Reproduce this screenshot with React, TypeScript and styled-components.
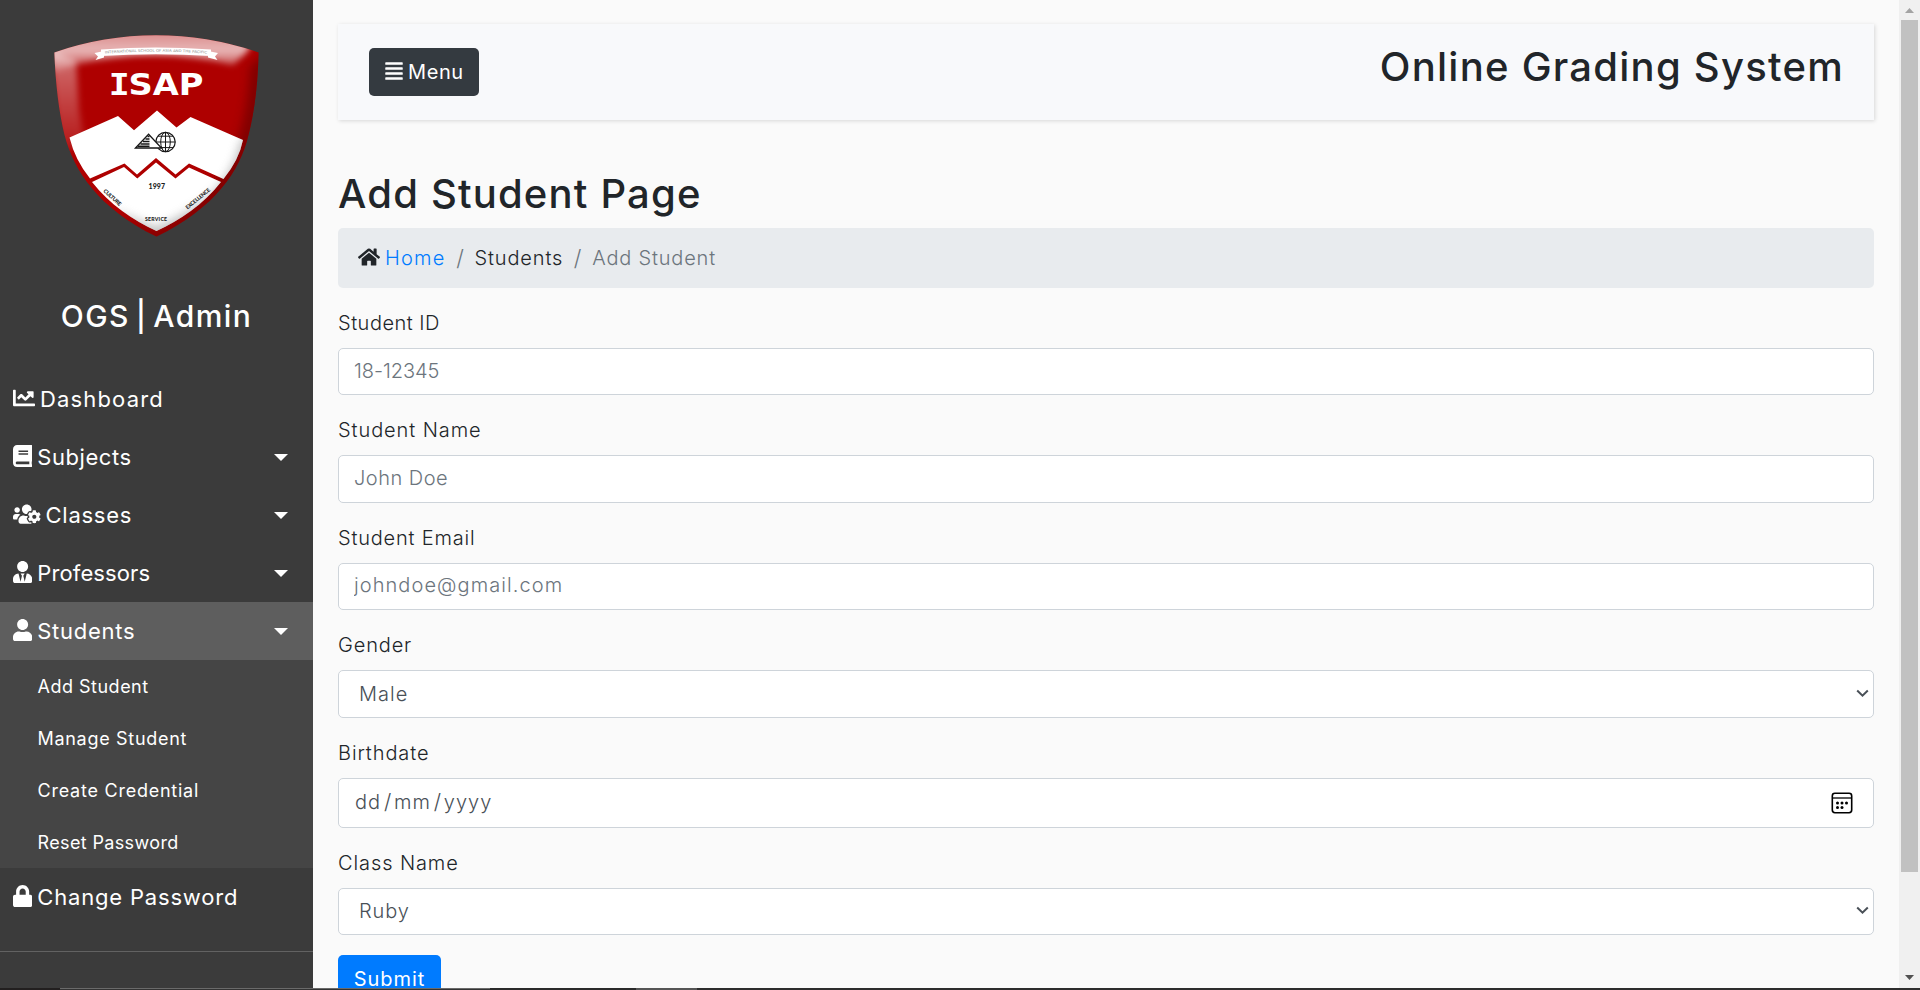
import React from "react";
import styled, { createGlobalStyle } from "styled-components";
import {
  FaAlignJustify,
  FaBook,
  FaChartLine,
  FaHome,
  FaLock,
  FaUser,
  FaUsersCog,
  FaUserTie,
} from "react-icons/fa";

const GlobalStyle = createGlobalStyle`
  *, *::before, *::after { box-sizing: border-box; }
  html, body { margin: 0; padding: 0; overflow: hidden; }
  body {
    background: #fafafa;
    color: #212529;
    font-family: Inter, "Open Sans", sans-serif;
    font-size: 20px;
    font-weight: 350;
    line-height: 30px;
  }
`;

const Page = styled.div`
  height: 990px;
  display: flex;
  flex-direction: column;
`;

const Viewport = styled.div`
  height: 988px;
  display: flex;
  overflow: hidden;
`;

/* ---------- Sidebar ---------- */

const Sidebar = styled.nav`
  width: 313px;
  flex: none;
  background: #3b3b3b;
  color: #fff;
  font-weight: 400;
`;

const SidebarHeader = styled.div`
  height: 370px;
  padding-top: 35px;
  display: flex;
  flex-direction: column;
  align-items: center;
`;

const Crest = styled.svg`
  display: block;
  width: 206px;
  height: 202px;
`;

const Brand = styled.h3`
  margin: 61px 0 0;
  font-size: 30px;
  line-height: 36px;
  font-weight: 500;
  letter-spacing: 1.4px;
  word-spacing: -3.5px;
`;

const NavRow = styled.a<{ $active?: boolean }>`
  display: flex;
  align-items: center;
  height: 58px;
  padding: 0 25px 0 13px;
  font-size: 22px;
  background: ${(p) => (p.$active ? "#5e5e5e" : "transparent")};
`;

const NavIcon = styled.span<{ $w: number }>`
  display: flex;
  width: ${(p) => p.$w}px;
  margin: -2px 5px 0 0;
  svg {
    width: 100%;
    height: 22px;
  }
`;

const Tracked = styled.span<{ $ls: number }>`
  letter-spacing: ${(p) => p.$ls}px;
  white-space: nowrap;
`;

const Caret = styled.span`
  margin-left: auto;
  border-top: 7px solid #fff;
  border-left: 7px solid transparent;
  border-right: 7px solid transparent;
`;

const SubMenu = styled.div`
  background: #454545;
`;

const SubRow = styled.a`
  display: flex;
  align-items: center;
  height: 52px;
  padding: 2px 0 0 37.5px;
  font-size: 18px;
`;

const NavDivider = styled.div`
  margin-top: 25px;
  height: 1px;
  background: #626262;
`;

/* ---------- Content ---------- */

const Content = styled.main`
  flex: 1;
  min-width: 0;
  padding: 24px 25px 0;
`;

const TopBar = styled.header`
  display: flex;
  align-items: center;
  justify-content: space-between;
  height: 96px;
  padding: 0 30px 0 31px;
  background: #f8f9fb;
  box-shadow: 1px 1px 4px rgba(0, 0, 0, 0.14);
`;

const MenuButton = styled.button`
  display: flex;
  align-items: center;
  width: 110px;
  height: 48px;
  padding: 0 0 0 16px;
  border: 0;
  border-radius: 5px;
  background: #343a40;
  color: #fff;
  font: 400 20px/30px Inter, sans-serif;
  svg {
    width: 18px;
    height: 20px;
    margin: -2px 5px 0 0;
  }
`;

const Heading = styled.h2<{ $ls: number }>`
  margin: 0 0 10px;
  font-size: 40px;
  line-height: 48px;
  font-weight: 500;
  letter-spacing: ${(p) => p.$ls}px;
`;

const PageTitle = styled(Heading)`
  margin-top: 50px;
`;

const Breadcrumb = styled.div`
  display: flex;
  align-items: center;
  height: 60px;
  margin-bottom: 20px;
  padding-left: 20px;
  border-radius: 5px;
  background: #e8ebee;
  svg {
    width: 22px;
    height: 20px;
    margin: -2px 5px 0 0;
  }
`;

const Crumb = styled.span<{ $ls: number; $color?: string }>`
  letter-spacing: ${(p) => p.$ls}px;
  color: ${(p) => p.$color ?? "#212529"};
`;

const Slash = styled.span`
  width: 29px;
  color: #6c757d;
  text-align: center;
  font-size: 22px;
`;

const Field = styled.div`
  margin-bottom: 20px;
`;

const Label = styled.label<{ $ls: number }>`
  display: block;
  margin-bottom: 10px;
  letter-spacing: ${(p) => p.$ls}px;
`;

const TextInput = styled.input<{ $ls: number }>`
  display: block;
  width: 100%;
  height: 47.4px;
  padding: 0 15px 2px;
  border: 1px solid #ced4da;
  border-radius: 5px;
  background: #fff;
  color: #495057;
  font: inherit;
  letter-spacing: ${(p) => p.$ls}px;
  &::placeholder {
    color: #6c757d;
    opacity: 1;
  }
`;

const Control = styled.div<{ $h: number; $pad: string }>`
  display: flex;
  align-items: center;
  justify-content: space-between;
  height: ${(p) => p.$h}px;
  padding: ${(p) => p.$pad};
  border: 1px solid #ced4da;
  border-radius: 5px;
  background: #fff;
  color: #495057;
`;

const DateText = styled.span`
  padding-bottom: 2px;
`;

const DatePart = styled.span`
  letter-spacing: 1px;
`;

const DateSlash = styled.span`
  margin: 0 2.8px;
  font-size: 21px;
`;

const Submit = styled.button`
  display: block;
  width: 103px;
  height: 48px;
  padding: 0;
  border: 0;
  border-radius: 5px;
  background: #007bff;
  color: #fff;
  font: 400 20px/30px Inter, sans-serif;
  letter-spacing: 0.95px;
`;

/* ---------- Scrollbar and desktop edge ---------- */

const ScrollTrack = styled.div`
  display: flex;
  flex-direction: column;
  align-items: center;
  width: 21px;
  flex: none;
  background: #f0f0f0;
`;

const ScrollButton = styled.svg`
  display: block;
  width: 17px;
  height: 20px;
  flex: none;
`;

const ScrollThumb = styled.div`
  width: 17px;
  height: 852px;
  background: #c1c1c1;
`;

const ScrollSpace = styled.div`
  flex: 1;
`;

const Edge = styled.div`
  display: flex;
  height: 2px;
  background: #2d2d2d;
`;

const EdgePart = styled.div<{ $w: number; $top: string; $bottom: string }>`
  width: ${(p) => p.$w}px;
  background: ${(p) => p.$bottom};
  border-top: 1px solid ${(p) => p.$top};
`;

const SHIELD =
  "M54.4 52.4 Q104 35.3 156 35.3 Q208 35.3 258.6 52.4 Q257.500 100 248.500 135 C240 171 215 208 156.500 236.600 C98 208 74 171 64.500 135 Q56 100 54.400 52.400Z";

function SchoolCrest() {
  return (
    <Crest viewBox="54 35 206 202" fontFamily="DejaVu Sans, sans-serif">
      <defs>
        <clipPath id="shield">
          <path d={SHIELD} />
        </clipPath>
        <clipPath id="panels">
          <path d="M69.500 137.500 L118 116 L134 130.300 L157 110.500 L176.500 127.500 L190.500 117 L243 140 Q239 160 223.500 179 L189 163.500 L175.500 174.500 L156 158 L137 174.500 L124.500 163.500 L90 178.500 Q75 160 69.500 137.500Z" />
          <path d="M92 182 L124 167 L137.300 178.500 L156 162.500 L175.500 178.500 L189 167.500 L221 182 C203 205 180 220 156.500 231 C133 220 110 205 92 182Z" />
        </clipPath>
        <linearGradient id="topShine" x1="0" y1="0" x2="0" y2="1">
          <stop offset="0" stopColor="#fff" stopOpacity="0.5" />
          <stop offset="0.5" stopColor="#fff" stopOpacity="0.72" />
          <stop offset="1" stopColor="#fff" stopOpacity="0.05" />
        </linearGradient>
        <linearGradient id="leftShine" x1="0" y1="0" x2="0" y2="1">
          <stop offset="0" stopColor="#fff" stopOpacity="0.45" />
          <stop offset="1" stopColor="#fff" stopOpacity="0.08" />
        </linearGradient>
        <filter id="soft4" x="-30%" y="-30%" width="160%" height="160%">
          <feGaussianBlur stdDeviation="3.200" />
        </filter>
        <filter id="soft8" x="-30%" y="-30%" width="160%" height="160%">
          <feGaussianBlur stdDeviation="5" />
        </filter>
      </defs>
      <g clipPath="url(#shield)">
        <rect x="54" y="35" width="206" height="202" fill="#ae0000" />
        <path d="M50 50 L76 60 L79 110 L86 150 L60 150Z" fill="url(#leftShine)" filter="url(#soft4)" />
        <path
          d="M50 28 L262 28 L246 53 L233 65 Q156 46 74 65 L50 74Z"
          fill="url(#topShine)"
          filter="url(#soft4)"
        />
        <path
          d="M268 50 L250 66 Q247 120 234 150 Q210 205 156 231 L120 216 L156 244 L268 180Z"
          fill="#650000"
          opacity="0.6"
          filter="url(#soft8)"
        />
      </g>
      <g clipPath="url(#panels)">
        <rect x="60" y="105" width="190" height="130" fill="#fff" />
        <path
          d="M254 130 L240 142 Q232 177 204 200 Q182 216 156 227 L110 208 L156 242 L254 190Z"
          fill="#9a9a9a"
          opacity="0.6"
          filter="url(#soft8)"
        />
      </g>
      <path d="M94.500 53 L104 51 L104 57.500 L95.500 60 L98 56.500Z M218 53 L208 51 L208 57.500 L217.500 60 L215 56.500Z" fill="#fff" />
      <path d="M101 49.500 Q156 45.500 211 49.500 L211 56 Q156 52.500 101 56Z" fill="#fff" />
      <path id="motto" d="M105 53.600 Q156 49.800 207 53.600" fill="none" />
      <text fontSize="3.500" fill="#8c8c8c">
        <textPath href="#motto" textLength="102" lengthAdjust="spacingAndGlyphs">
          INTERNATIONAL SCHOOL OF ASIA AND THE PACIFIC
        </textPath>
      </text>
      <g fontSize="29.300" fontWeight="700" fill="#fff">
        <text
          x="108.800"
          y="95.300"
          fontFamily="DejaVu Sans Mono"
          textLength="21"
          lengthAdjust="spacingAndGlyphs"
        >
          I
        </text>
        <text x="128.500" y="95.300" textLength="75" lengthAdjust="spacingAndGlyphs">
          SAP
        </text>
      </g>
      <g fill="none" stroke="#161616" strokeWidth="1">
        <circle cx="165.500" cy="142" r="9.700" strokeWidth="1.200" />
        <ellipse cx="165.500" cy="142" rx="4.800" ry="9.700" />
        <path d="M165.500 132.300V151.700M156 142H175.200M158 136.200H173M158 147.600H173" />
      </g>
      <path d="M149 134.500 L161.500 148.200 H149Z" fill="#fff" />
      <path d="M135.500 148 L148.600 134.300 L161.500 148Z" fill="none" stroke="#161616" strokeWidth="1.300" />
      <path
        d="M147.500 136.500H149.500M145.500 139H149.500M143 141.500H149.500M140.500 144H149.500M138 146.300H149.500"
        stroke="#161616"
        strokeWidth="1.500"
      />
      <g fill="#1c1c1c" fontWeight="900" fontFamily="Lato, sans-serif">
        <text x="148.500" y="188.500" fontSize="7" textLength="16.500">
          1997
        </text>
        <text x="145" y="221" fontSize="5.200" textLength="22">
          SERVICE
        </text>
        <text transform="translate(103 191.500) rotate(42)" fontSize="5.400" textLength="22">
          CULTURE
        </text>
        <text transform="translate(187.500 209.500) rotate(-39.500)" fontSize="5.400" textLength="30">
          EXCELLENCE
        </text>
      </g>
    </Crest>
  );
}

const Chevron = () => (
  <svg width="13" height="9" viewBox="0 0 13 9" fill="none" stroke="#495057" strokeWidth="2">
    <path d="M1.200 1.500 L6.500 6.700 L11.800 1.500" />
  </svg>
);

const CalendarIcon = () => (
  <svg width="22" height="22" viewBox="0 0 22 22">
    <rect x="1.300" y="1.300" width="19.400" height="19.400" rx="2.600" fill="none" stroke="#000" strokeWidth="1.600" />
    <path d="M1 6H21" stroke="#000" strokeWidth="1.300" />
    {[
      [6.5, 11],
      [11, 11],
      [15.5, 11],
      [6.5, 15.5],
      [11, 15.5],
    ].map(([x, y]) => (
      <circle key={`${x}-${y}`} cx={x} cy={y} r="1.500" />
    ))}
  </svg>
);

type NavItem = { text: string; ls: number; icon: React.ReactNode; w: number; caret?: boolean; active?: boolean };

const NAV: NavItem[] = [
  { text: "Dashboard", ls: 1.16, icon: <FaChartLine />, w: 22 },
  { text: "Subjects", ls: 0.57, icon: <FaBook />, w: 19.25, caret: true },
  { text: "Classes", ls: 0.75, icon: <FaUsersCog />, w: 27.5, caret: true },
  { text: "Professors", ls: 0.12, icon: <FaUserTie />, w: 19.25, caret: true },
  { text: "Students", ls: 0.72, icon: <FaUser />, w: 19.25, caret: true, active: true },
];

const SUB = [
  { text: "Add Student", ls: 0.5 },
  { text: "Manage Student", ls: 0.7 },
  { text: "Create Credential", ls: 0.76 },
  { text: "Reset Password", ls: 0.36 },
];

const TEXT_FIELDS = [
  { label: "Student ID", ls: 0.5, hint: "18-12345", hintLs: -0.07 },
  { label: "Student Name", ls: 0.92, hint: "John Doe", hintLs: 0.5 },
  { label: "Student Email", ls: 0.8, hint: "johndoe@gmail.com", hintLs: 1.07 },
];

function NavLink({ item }: { item: NavItem }) {
  return (
    <NavRow $active={item.active}>
      <NavIcon $w={item.w}>{item.icon}</NavIcon>
      <Tracked $ls={item.ls}>{item.text}</Tracked>
      {item.caret && <Caret />}
    </NavRow>
  );
}

export default function App() {
  return (
    <Page>
      <GlobalStyle />
      <Viewport>
        <Sidebar>
          <SidebarHeader>
            <SchoolCrest />
            <Brand>OGS | Admin</Brand>
          </SidebarHeader>
          {NAV.map((item) => (
            <NavLink key={item.text} item={item} />
          ))}
          <SubMenu>
            {SUB.map((s) => (
              <SubRow key={s.text}>
                <Tracked $ls={s.ls}>{s.text}</Tracked>
              </SubRow>
            ))}
          </SubMenu>
          <NavLink item={{ text: "Change Password", ls: 0.82, icon: <FaLock />, w: 19.25 }} />
          <NavDivider />
        </Sidebar>

        <Content>
          <TopBar>
            <MenuButton>
              <FaAlignJustify />
              <Tracked $ls={0.6}>Menu</Tracked>
            </MenuButton>
            <Heading $ls={1.25}>Online Grading System</Heading>
          </TopBar>

          <PageTitle $ls={1.18}>Add Student Page</PageTitle>
          <Breadcrumb>
            <FaHome />
            <Crumb $ls={1.2} $color="#007bff">
              Home
            </Crumb>
            <Slash>/</Slash>
            <Crumb $ls={0.85}>Students</Crumb>
            <Slash>/</Slash>
            <Crumb $ls={0.81} $color="#6c757d">
              Add Student
            </Crumb>
          </Breadcrumb>

          {TEXT_FIELDS.map((f) => (
            <Field key={f.label}>
              <Label $ls={f.ls}>{f.label}</Label>
              <TextInput $ls={f.hintLs} placeholder={f.hint} />
            </Field>
          ))}
          <Field>
            <Label $ls={0.85}>Gender</Label>
            <Control $h={47.4} $pad="0 4px 0 20px">
              <Tracked $ls={1}>Male</Tracked>
              <Chevron />
            </Control>
          </Field>
          <Field>
            <Label $ls={0.9}>Birthdate</Label>
            <Control $h={50} $pad="0 20px 0 16px">
              <DateText>
                <DatePart>dd</DatePart>
                <DateSlash>/</DateSlash>
                <DatePart>mm</DatePart>
                <DateSlash>/</DateSlash>
                <DatePart>yyyy</DatePart>
              </DateText>
              <CalendarIcon />
            </Control>
          </Field>
          <Field>
            <Label $ls={0.9}>Class Name</Label>
            <Control $h={47.4} $pad="0 4px 1px 20px">
              <Tracked $ls={0.9}>Ruby</Tracked>
              <Chevron />
            </Control>
          </Field>
          <Submit>Submit</Submit>
        </Content>

        <ScrollTrack>
          <ScrollButton viewBox="0 0 17 20">
            <path d="M4 13 L8.500 8 L13 13Z" fill="#a3a3a3" />
          </ScrollButton>
          <ScrollThumb />
          <ScrollSpace />
          <ScrollButton viewBox="0 0 17 20">
            <path d="M4 7 L13 7 L8.500 12Z" fill="#505050" />
          </ScrollButton>
        </ScrollTrack>
      </Viewport>
      <Edge>
        <EdgePart $w={60} $top="#221f1f" $bottom="#221f1f" />
        <EdgePart $w={430} $top="#6a6a6a" $bottom="#333333" />
        <EdgePart $w={146} $top="#2a2a2a" $bottom="#2a2a2a" />
        <EdgePart $w={61} $top="#555555" $bottom="#555555" />
      </Edge>
    </Page>
  );
}
